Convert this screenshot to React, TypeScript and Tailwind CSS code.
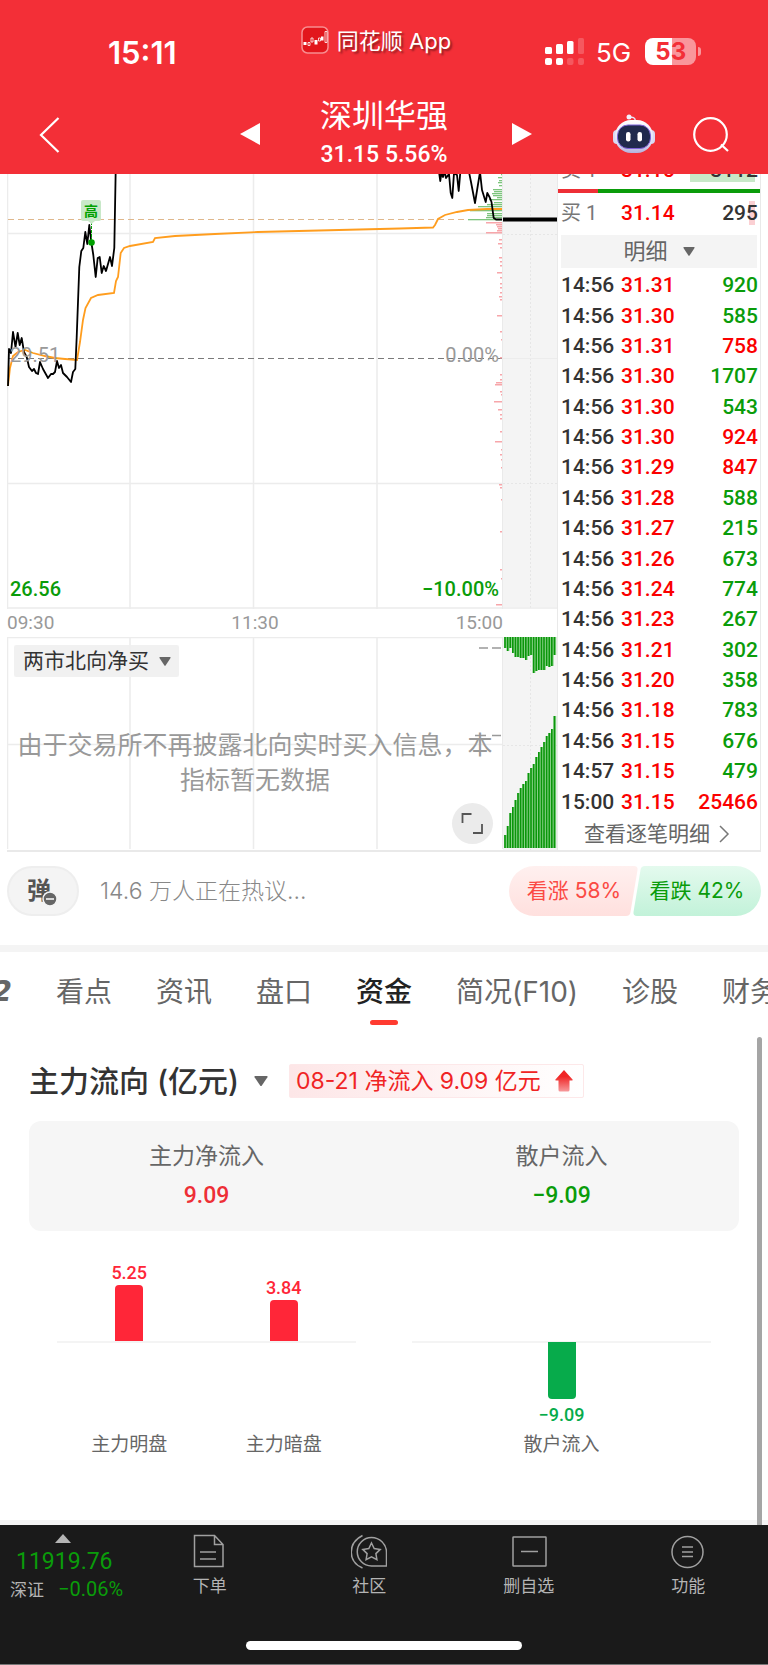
import type { ReactNode } from "react";
import clsx from "clsx";

type Tick = [time: string, price: string, volume: string, side: "up" | "down"];

const TICKS: Tick[] = [
  ["14:56", "31.31", "920", "down"],
  ["14:56", "31.30", "585", "down"],
  ["14:56", "31.31", "758", "up"],
  ["14:56", "31.30", "1707", "down"],
  ["14:56", "31.30", "543", "down"],
  ["14:56", "31.30", "924", "up"],
  ["14:56", "31.29", "847", "up"],
  ["14:56", "31.28", "588", "down"],
  ["14:56", "31.27", "215", "down"],
  ["14:56", "31.26", "673", "down"],
  ["14:56", "31.24", "774", "down"],
  ["14:56", "31.23", "267", "down"],
  ["14:56", "31.21", "302", "down"],
  ["14:56", "31.20", "358", "down"],
  ["14:56", "31.18", "783", "down"],
  ["14:56", "31.15", "676", "down"],
  ["14:57", "31.15", "479", "down"],
  ["15:00", "31.15", "25466", "up"],
];

const PRICE_OPEN =
  "8,386 9,349 11,353 13,332 15.5,347 17.7,333 19.7,345 21.7,338 24,352 26.7,357 29,367 32,371 34,369 36,373 38,374 40,362 43,369 48,378 51,374 53,374 55,372 57,361 59,368 61,365 63,373 67,377 71,382 73,372 75.3,369 76.7,337 79.3,267 81.3,251 83.3,248 85.3,232 87.3,244 89.3,225 91.3,242 93.3,255 95.7,277 97.7,258 99.7,257 101.7,273 103.7,266 106,271 110,257 112,266 114.3,248 115.7,170";
const PRICE_CLOSE =
  "439,172 440.3,181 441.5,172 443,177 444.5,171 446,178 449,174 450.7,193 452.3,198 454,173 457,175 458.7,191 460.5,170";
const PRICE_END =
  "469,172 471,182 475,203 480,172 482,190 485.7,202 487.3,193 489.5,197 491.5,202 493.7,218 496,219.5 502,219.5";
const AVERAGE =
  "8,386 10,368 13,356 18,352 25,350 33,353 45,356 55,358 65,359 77,360 80,342 83,320 85.5,308 91,298 98,295 114,293 116,281 118,277 120.7,253 124,248 130,246 153,242 155,238 175,236 215,234 258,232 400,228.5 433,227.5 435,225 438,219 445,215 457,212 468,210 487,209 502,209";

// [y, length] of the turnover ticks on the right edge of the price chart
const SELL_LEVELS = [
  [175, 1], [178, 4], [181, 3], [183, 4], [186, 3], [190, 9], [192, 8], [194, 10], [196, 9], [198, 5],
  [200, 13], [203, 8], [205, 15], [207, 24], [209, 10], [211, 32], [214, 15], [216, 15], [218, 16], [220, 34],
];
const BUY_LEVELS = [
  [223, 16], [225, 6], [227, 5], [229, 4], [231, 5], [233, 16], [240, 3], [244, 4], [248, 2], [258, 3], [262, 2],
  [266, 2], [273, 5], [278, 2], [284, 2], [288, 2], [293, 2], [297, 3], [300, 2], [316, 5], [332, 2], [340, 1],
  [358, 2], [375, 2], [380, 2], [383, 6], [385, 7], [392, 2], [395, 1], [402, 8], [410, 4], [415, 2], [419, 2],
  [432, 2], [442, 7], [450, 1], [455, 2], [460, 1], [468, 1], [485, 3], [488, 2], [500, 1], [532, 2], [570, 2],
  [579, 1], [605, 6],
];

const HANGING_BARS = [11, 14, 11, 16, 20, 20, 21, 21, 23, 19, 18, 36, 34, 33, 33, 33, 29, 30, 29, 18];
const RISING_BARS = [13, 22, 35, 41, 48, 55, 60, 64, 67, 75, 80, 84, 91, 96, 101, 106, 112, 115, 119, 132];

function Caret({ className }: { className?: string }) {
  return (
    <svg viewBox="0 0 12 9" className={className} fill="#666" aria-hidden>
      <path d="M1 0h10q1 0 .5 1L6.600 8.400q-.6.700-1.200 0L.5 1Q0 0 1 0z" />
    </svg>
  );
}

type DropdownProps = { label: string; value: string; className?: string; caret?: string };

function Dropdown({ label, value, className, caret }: DropdownProps) {
  return (
    <div className="relative inline-flex items-center">
      <select aria-label={label} className={clsx("cursor-pointer appearance-none bg-transparent outline-none", className)}>
        <option>{value}</option>
      </select>
      <Caret className={clsx("pointer-events-none absolute right-0", caret ?? "w-3")} />
    </div>
  );
}

function RobotIcon() {
  return (
    <svg viewBox="0 0 44 40" className="h-10 w-11" aria-hidden>
      <defs>
        <linearGradient id="shell" x1="0" y1="0" x2="0" y2="1">
          <stop offset="0" stopColor="#fff" />
          <stop offset=".7" stopColor="#dcdcf4" />
          <stop offset="1" stopColor="#b4b2dd" />
        </linearGradient>
      </defs>
      <path d="M17 3.500c4-1 6 0 6.500 3.500" fill="none" stroke="#e6e4f6" strokeWidth="1.500" />
      <circle cx="17" cy="3" r="2.500" fill="#f2f0fc" />
      <rect x="1" y="16" width="8" height="14" rx="4" fill="#d9d8f2" />
      <rect x="35" y="16" width="8" height="14" rx="4" fill="#d9d8f2" />
      <rect x="3" y="6" width="38" height="33" rx="16" fill="url(#shell)" />
      <rect x="5.500" y="11" width="33" height="23.500" rx="10.500" fill="#202a4d" stroke="#7d62d8" strokeWidth="1" />
      <rect x="14" y="18" width="4.500" height="9.500" rx="2.200" fill="#fff" />
      <rect x="25.500" y="18" width="4.500" height="9.500" rx="2.200" fill="#fff" />
    </svg>
  );
}

function StatusBar() {
  return (
    <div className="grid h-[88px] grid-cols-3">
      <div className="pt-[34px] pl-[108px] text-[31px] leading-[38px] font-semibold">15:11</div>
      <div className="flex items-start justify-center gap-2 pt-[26px] pr-4 text-[22px] leading-[30px] whitespace-nowrap">
        <svg viewBox="0 0 28 28" className="h-7 w-7 shrink-0" aria-hidden>
          <rect x="1" y="1" width="26" height="26" rx="5.500" fill="#e2161c" stroke="#f88d90" strokeWidth="1.500" />
          <path d="M2.500 16h3v3h-3zM13.500 14h3v4.500h-3zM20 10.500h2.500v4H20z" fill="#fff" />
          <path d="M7 16.500h2v3H7zM10 12h2v4h-2zM17.500 12h2v3h-2zM24 5.500h2v11h-2z" fill="none" stroke="#fff" strokeWidth=".8" />
        </svg>
        <span className="[text-shadow:2px_2px_2px_#00000066]">同花顺 App</span>
      </div>
      <div className="flex items-start pt-[38px] pl-8">
        <svg viewBox="0 0 40 28" className="h-7 w-10" fill="#fff" aria-hidden>
          <rect x="1" y="9" width="7" height="7" rx="1.500" />
          <rect x="12" y="6" width="7" height="10" rx="1.500" />
          <rect x="23" y="3" width="6.500" height="13" rx="1.500" />
          <rect x="34" y="0" width="6" height="16" rx="1.500" opacity=".2" />
          <rect x="1" y="20" width="7" height="7" rx="2" />
          <rect x="12" y="20" width="7" height="7" rx="2" />
          <rect x="23" y="20" width="6.500" height="7" rx="2" opacity=".2" />
          <rect x="34" y="20" width="6" height="7" rx="2" opacity=".2" />
        </svg>
        <span className="ml-3 text-[26px] leading-[30px]">5G</span>
        <div className="ml-3.5 flex items-center">
          <div className="flex h-[27px] w-[51px] items-center justify-center rounded-[8px] bg-linear-to-r from-white from-53% to-[#f9969b] to-53% text-[24px] leading-none font-bold text-[#f32f37]">
            53
          </div>
          <span className="ml-0.5 h-[9px] w-[3px] rounded-r-full bg-[#f9969b]" />
        </div>
      </div>
    </div>
  );
}

function Header() {
  return (
    <header className="bg-[#f32f37] text-white">
      <StatusBar />
      <div className="grid h-[86px] grid-cols-[1fr_auto_1fr]">
        <button aria-label="返回" className="mt-7 ml-[38px] h-[38px] w-6">
          <svg viewBox="0 0 24 38" fill="none" stroke="#fff" strokeWidth="2.200">
            <path d="M20.500 2 3 19l17.500 17" />
          </svg>
        </button>
        <div className="flex items-start gap-[60px] pl-1">
          <button aria-label="上一只" className="mt-[35px] w-5">
            <svg viewBox="0 0 20 22" fill="#fff">
              <path d="M20 0v22L0 11z" />
            </svg>
          </button>
          <div className="pr-1 text-center">
            <h1 className="pt-2 text-[32px] leading-10">深圳华强</h1>
            <p className="font-[Roboto] text-[23px] leading-[38px] font-medium">31.15 5.56%</p>
          </div>
          <button aria-label="下一只" className="mt-[35px] w-5">
            <svg viewBox="0 0 20 22" fill="#fff">
              <path d="M0 0v22l20-11z" />
            </svg>
          </button>
        </div>
        <div className="flex items-start justify-end gap-9 pt-[26px] pr-[38px]">
          <button aria-label="智能助手">
            <RobotIcon />
          </button>
          <button aria-label="搜索" className="mt-0.5 w-[38px]">
            <svg viewBox="0 0 38 38" fill="none" stroke="#fff" strokeWidth="2.200">
              <circle cx="18.500" cy="18.500" r="16.300" />
              <path d="m29 28.500 7 6.500" />
            </svg>
          </button>
        </div>
      </div>
    </header>
  );
}

function PriceChart() {
  return (
    <div className="relative h-[435px] overflow-hidden font-[Roboto] text-[20px] leading-6">
      <svg viewBox="7 174 496 435" preserveAspectRatio="none" className="h-full w-full" fill="none" aria-hidden>
        <path d="M7.500 174v435M130 174v435M253.500 174v435M377 174v435M7 233.500h496M7 483.500h496M7 608h496" stroke="#ececec" strokeWidth="1.500" />
        <path d="M502.500 174v435" stroke="#eaeaea" />
        <path d="M8 219.500h494" stroke="#dfb78c" strokeDasharray="6 4" />
        <path d="M8 358.500h494" stroke="#7a7a7a" strokeDasharray="6 4" />
        {SELL_LEVELS.map(([y, len]) => (
          <rect key={y} x={502 - len} y={y - 1} width={len} height="1.300" fill="#7cc47c" />
        ))}
        {BUY_LEVELS.map(([y, len]) => (
          <rect key={y} x={502 - len} y={y - 1} width={len} height="1.500" fill="#f7a6aa" />
        ))}
        <polyline points={AVERAGE} stroke="#ff9d1e" strokeWidth="1.800" />
        <g stroke="#000" strokeWidth="1.800" strokeLinejoin="round">
          <polyline points={PRICE_OPEN} />
          <polyline points={PRICE_CLOSE} />
          <polyline points={PRICE_END} />
        </g>
        <path d="M91.500 222v18" stroke="#00a000" strokeDasharray="3 1" />
        <path d="M88 221h7l-3.500 3z" fill="#c8e8c8" />
        <circle cx="91.500" cy="242.500" r="3.300" fill="#00a000" />
      </svg>
      <span className="absolute top-[26px] left-[74px] rounded-xs bg-[#c8e8c8] px-[3px] text-[14px] leading-[21px] font-bold text-[#00a000] [font-family:'Noto_Sans_CJK_SC']">
        高
      </span>
      <span className="absolute top-[169px] left-[3px] text-[#999]">29.51</span>
      <span className="absolute top-[169px] right-1 text-[#999]">0.00%</span>
      <span className="absolute bottom-2 left-[3px] font-medium text-[#0a9c0a]">26.56</span>
      <span className="absolute right-1 bottom-2 font-medium text-[#0a9c0a]">−10.00%</span>
    </div>
  );
}

function NorthboundPanel() {
  return (
    <div className="relative h-[213px]">
      <svg viewBox="7 637 496 213" preserveAspectRatio="none" className="absolute inset-0 h-full w-full" fill="none" aria-hidden>
        <path d="M7.500 637v212M130 637v212M253.500 637v212M377 637v212M7 744.500h496M7 637.500h496" stroke="#ececec" strokeWidth="1.500" />
        <path d="M502.500 637v212" stroke="#eaeaea" />
        <path d="M479 648h9M492 648h9M475 735.500h11M492 735.500h9" stroke="#999" strokeWidth="1.500" />
      </svg>
      <div className="relative flex h-full flex-col items-start pt-2 pl-[7px]">
        <div className="rounded-xs bg-[#f0f0f0]/90 pr-2 pl-[9px]">
          <Dropdown label="指标" value="两市北向净买" className="h-8 pr-[22px] text-[21px] text-[#333]" />
        </div>
        <p className="mt-[51px] w-full pr-[7px] text-center text-[25px] leading-[35px] text-[#999]">
          由于交易所不再披露北向实时买入信息，本指标暂无数据
        </p>
      </div>
      <button aria-label="全屏" className="absolute right-[10px] bottom-[6px] h-[41px] w-[41px] rounded-full bg-[#ebebeb] p-[9px]">
        <svg viewBox="0 0 23 23" fill="none" stroke="#555" strokeWidth="1.800">
          <path d="M1.500 11V2h9M12 21h9v-9" />
        </svg>
      </button>
    </div>
  );
}

function AuctionColumn() {
  return (
    <div className="w-[54px] shrink-0">
      <svg viewBox="0 0 54 435" preserveAspectRatio="none" className="h-[435px] w-full bg-[#f4f4f4]" fill="none" aria-hidden>
        <path d="M27.500 0v435M0 60.500h54M0 309.500h54" stroke="#e6e6e6" strokeDasharray="2 2" />
        <path d="M0 184.500h54M0 434h54" stroke="#ececec" />
        <rect y="43.500" width="54" height="4" fill="#000" />
      </svg>
      <div className="h-7" />
      <svg viewBox="0 0 54 213" preserveAspectRatio="none" className="h-[213px] w-full bg-[#f4f4f4]" aria-hidden>
        <path d="M27.500 0v213M0 108.500h54" stroke="#e6e6e6" strokeDasharray="2 2" />
        {HANGING_BARS.map((h, i) => (
          <g key={i}>
            <rect x={1.2 + i * 2.6} width="2.600" height={h} fill="#84d084" />
            <rect x={1.2 + i * 2.6} width="1.600" height={h} fill="#0a960a" />
          </g>
        ))}
        {RISING_BARS.map((h, i) => (
          <g key={i}>
            <rect x={1.2 + i * 2.6} y={211 - h} width="2.600" height={h} fill="#84d084" />
            <rect x={1.2 + i * 2.6} y={211 - h} width="1.600" height={h} fill="#0a960a" />
          </g>
        ))}
      </svg>
    </div>
  );
}

function QuoteRow({ side, price, children }: { side: string; price: string; children: ReactNode }) {
  return (
    <div className="flex w-full shrink-0 items-center pr-0.5 pl-[3px] font-[Roboto] text-[21px] leading-6 font-medium">
      <span className="w-[60px] text-[20px] font-normal text-[#777] [font-family:Roboto,'Noto_Sans_CJK_SC']">{side}</span>
      <span className="text-[#fb0000]">{price}</span>
      {children}
    </div>
  );
}

function TradeList() {
  return (
    <div className="flex w-[204px] shrink-0 flex-col border-x border-[#e9e9e9] bg-white">
      <div className="flex h-[15px] items-end overflow-hidden pb-[7px]">
        <QuoteRow side="卖 1" price="31.15">
          <span className="ml-auto w-[68px] bg-[linear-gradient(to_left,transparent_3px,#c8e8c8_3px)] text-right text-[#333]">
            3112
          </span>
        </QuoteRow>
      </div>
      <div className="flex h-1">
        <span className="w-1/5 bg-[#ee2f36]" />
        <span className="flex-1 bg-[#0a9c0a]" />
      </div>
      <div className="flex h-10 items-center">
        <QuoteRow side="买 1" price="31.14">
          <span className="ml-auto bg-[linear-gradient(to_left,transparent_3px,#fbd0d3_3px,#fbd0d3_9px,transparent_9px)] text-[#333]">
            295
          </span>
        </QuoteRow>
      </div>
      <div className="mx-[3px] mt-0.5 flex h-[33px] items-center justify-center bg-[#f4f4f4]">
        <Dropdown label="成交" value="明细" className="pr-[26px] text-[22px] text-[#666]" />
      </div>
      <table className="mt-0.5 h-[547px] w-full font-[Roboto] text-[21px] leading-6 font-medium">
        <tbody>
          {TICKS.map(([time, price, volume, side], i) => (
            <tr key={i}>
              <td className="w-[63px] p-0 pl-[3px] text-[#333]">{time}</td>
              <td className="p-0 text-[#fb0000]">{price}</td>
              <td className={clsx("p-0 pr-0.5 text-right", side === "up" ? "text-[#fb0000]" : "text-[#0a9c0a]")}>
                {volume}
              </td>
            </tr>
          ))}
        </tbody>
      </table>
      <a href="#ticks" className="flex flex-1 items-center justify-center gap-2 pr-1 text-[21px] text-[#666]">
        查看逐笔明细
        <svg viewBox="0 0 12 18" className="w-3" fill="none" stroke="#777" strokeWidth="1.500" aria-hidden>
          <path d="m2 1 8 8-8 8" />
        </svg>
      </a>
    </div>
  );
}

function DiscussionBar() {
  return (
    <section className="flex h-[93px] items-start px-[7px] pt-3.5">
      <button aria-label="弹幕" className="relative h-[50px] w-[72px] rounded-full border-2 border-[#eee] bg-[#f4f4f4]">
        <span className="block pr-2 text-[24px] leading-[42px] font-bold text-[#555]">弹</span>
        <svg viewBox="0 0 16 16" className="absolute top-[23px] left-[33px] w-4" aria-hidden>
          <circle cx="8" cy="8" r="7" fill="#666" stroke="#f4f4f4" strokeWidth="1.500" />
          <path d="M4 8h8" stroke="#fff" strokeWidth="1.500" />
        </svg>
      </button>
      <p className="ml-[21px] text-[23px] leading-[50px] font-light text-[#888]">14.6 万人正在热议...</p>
      <div className="ml-auto flex">
        <button className="relative h-[50px] w-[130px] text-[21px] text-[#fb4a44]">
          <svg viewBox="0 0 130 50" className="absolute inset-0" aria-hidden>
            <defs>
              <linearGradient id="bull" x1="0" y1="0" x2="0" y2="1">
                <stop offset="0" stopColor="#fff0ef" />
                <stop offset="1" stopColor="#ffe0de" />
              </linearGradient>
            </defs>
            <path d="M25 0h100q4 0 3.500 4l-7 42q-.5 4-4.500 4H25a25 25 0 0 1 0-50z" fill="url(#bull)" />
          </svg>
          <span className="relative">看涨 58%</span>
        </button>
        <button className="relative -ml-1.5 h-[50px] w-[128px] text-[21px] text-[#0a9c0a]">
          <svg viewBox="0 0 128 50" className="absolute inset-0" aria-hidden>
            <defs>
              <linearGradient id="bear" x1="0" y1="0" x2="0" y2="1">
                <stop offset="0" stopColor="#e4faee" />
                <stop offset="1" stopColor="#c2f2d9" />
              </linearGradient>
            </defs>
            <path d="M103 0H12Q8 0 7.500 4l-7 42Q0 50 4 50h99a25 25 0 0 0 0-50z" fill="url(#bear)" />
          </svg>
          <span className="relative">看跌 42%</span>
        </button>
      </div>
    </section>
  );
}

const TABS = ["看点", "资讯", "盘口", "资金", "简况(F10)", "诊股", "财务"];

function Tabs() {
  return (
    <nav className="box-content flex h-[85px] gap-11 overflow-hidden border-t-[7px] border-[#f4f4f4] text-[28px] leading-[80px] whitespace-nowrap text-[#666]">
      <a href="#2" className="flex w-3 shrink-0 justify-end font-bold italic [font-family:'DejaVu_Sans']">
        2
      </a>
      {TABS.map((tab) => (
        <a
          key={tab}
          href={`#${tab}`}
          className={clsx("relative shrink-0", tab === "资金" && "font-medium text-[#222]")}
        >
          {tab}
          {tab === "资金" && (
            <span className="absolute top-[68px] left-1/2 h-[5px] w-7 -translate-x-1/2 rounded-full bg-[#ff3b30]" />
          )}
        </a>
      ))}
    </nav>
  );
}

function UpBar({ name, value, className }: { name: string; value: string; className: string }) {
  return (
    <div className="flex flex-1 flex-col items-center">
      <div className="flex h-[91px] flex-col items-center justify-end">
        <span className="font-[Roboto] text-[18px] leading-6 font-medium text-[#ff2638]">{value}</span>
        <div className={clsx("w-7 rounded-t-sm bg-[#ff2638]", className)} />
      </div>
      <span className="mt-[88px] text-[19px] leading-[30px] text-[#666]">{name}</span>
    </div>
  );
}

function FundFlow() {
  return (
    <section className="relative flex-1 px-[29px] pt-[27px]">
      <div className="flex h-[34px] items-center">
        <Dropdown
          label="资金流向"
          value="主力流向 (亿元)"
          className="pr-7 text-[30px] leading-[34px] font-medium text-[#333]"
          caret="w-3.5"
        />
        <div className="ml-[21px] flex h-[34px] items-center gap-3.5 rounded-xs border border-[#fde8e9] bg-linear-to-r from-[#fde6e7] to-white px-1.5 text-[23px] whitespace-nowrap text-[#f02424]">
          08-21 净流入 9.09 亿元
          <svg viewBox="0 0 18 22" className="mr-1 w-[18px]" aria-hidden>
            <defs>
              <linearGradient id="inflow" x1="0" y1="0" x2="0" y2="1">
                <stop offset=".3" stopColor="#f02424" />
                <stop offset="1" stopColor="#f79a9c" />
              </linearGradient>
            </defs>
            <path d="m9 0 8.500 9.500q.8 1-.5 1h-2.500V20q0 1.500-1.500 1.500H5Q3.500 21.500 3.500 20v-9.500H1q-1.300 0-.5-1z" fill="url(#inflow)" />
          </svg>
        </div>
      </div>

      <dl className="mt-[23px] grid h-[110px] grid-cols-2 rounded-xl bg-[#f6f6f6] pt-[18px] text-center">
        <div>
          <dt className="text-[23px] leading-[34px] text-[#666]">主力净流入</dt>
          <dd className="mt-1.5 font-[Roboto] text-[23px] leading-[34px] font-medium text-[#ee2f36]">9.09</dd>
        </div>
        <div>
          <dt className="text-[23px] leading-[34px] text-[#666]">散户流入</dt>
          <dd className="mt-1.5 font-[Roboto] text-[23px] leading-[34px] font-medium text-[#0a9c0a]">−9.09</dd>
        </div>
      </dl>

      <div className="mt-5 grid grid-cols-2">
        <div className="relative flex px-[23px]">
          <span className="absolute inset-x-7 top-[90px] h-0.5 bg-[#f4f4f4]" />
          <UpBar name="主力明盘" value="5.25" className="h-[57px]" />
          <UpBar name="主力暗盘" value="3.84" className="h-[42px]" />
        </div>
        <div className="relative flex flex-col items-center pt-[91px]">
          <span className="absolute inset-x-7 top-[90px] h-0.5 bg-[#f4f4f4]" />
          <div className="relative h-[57px] w-7 rounded-b-sm bg-[#07ab4b]" />
          <span className="mt-1 font-[Roboto] text-[18px] leading-6 font-medium text-[#07ab4b]">−9.09</span>
          <span className="mt-[3px] text-[19px] leading-[30px] text-[#666]">散户流入</span>
        </div>
      </div>

      <span className="absolute top-0 right-1.5 -bottom-[5px] w-[5px] rounded-t-full bg-[#a5a5a5]" />
    </section>
  );
}

function NavItem({ label, children }: { label: string; children: ReactNode }) {
  return (
    <a href={`#${label}`} className="flex flex-1 flex-col items-center pt-[9px] text-[17px] leading-6 text-[#b4b4b4]">
      <svg viewBox="0 0 36 36" className="h-9 w-9" fill="none" stroke="#a0a0a0" strokeWidth="1.500" aria-hidden>
        {children}
      </svg>
      <span className="mt-1">{label}</span>
    </a>
  );
}

function BottomNav() {
  return (
    <footer className="h-[140px] border-b border-[#777] bg-[#1a1a1a]">
      <nav className="flex h-[116px]">
        <a href="#index" className="flex w-[130px] shrink-0 flex-col pt-[9px] font-[Roboto] text-[#0a9c0a]">
          <svg viewBox="0 0 16 9" className="ml-[55px] w-4" fill="#b4b4b4" aria-hidden>
            <path d="m8 0 8 9H0z" />
          </svg>
          <span className="mt-1.5 pl-4 text-[23px] leading-[26px]">11919.76</span>
          <span className="mt-px flex items-center gap-3.5 pl-[10px] text-[20px] leading-[26px]">
            <span className="text-[17px] text-[#b4b4b4] [font-family:'Noto_Sans_CJK_SC']">深证</span>
            −0.06%
          </span>
        </a>
        <NavItem label="下单">
          <path d="M2.500 1.500h20l8.500 9v22H2.500zM22.500 1.500v9H31M8 18h16M8 25h16" />
        </NavItem>
        <NavItem label="社区">
          <path d="M11.500 1.500C-3.500 9-3.500 27.500 11.500 34" />
          <path d="M20.500 3.500c8 0 15 6.500 15 15v13.500h-15a14.200 14.200 0 0 1 0-28.500z" />
          <path d="m20.500 9 2.700 5.500 6 .9-4.300 4.200 1 6-5.400-2.800-5.400 2.800 1-6-4.300-4.200 6-.9z" />
        </NavItem>
        <NavItem label="删自选">
          <rect x="2" y="3" width="33" height="29" rx=".5" />
          <path d="M10 17.500h17" />
        </NavItem>
        <NavItem label="功能">
          <circle cx="17.500" cy="18" r="15.500" />
          <path d="M12 13h11M12 18h11M12 22.500h11" />
        </NavItem>
      </nav>
      <div className="mx-auto h-[9px] w-[276px] rounded-full bg-white" />
    </footer>
  );
}

export default function App() {
  return (
    <div className="flex min-h-screen flex-col bg-white [font-family:Inter,'Noto_Sans_CJK_SC',sans-serif]">
      <Header />
      <main className="flex flex-1 flex-col border-b-[5px] border-[#f4f4f4]">
        <section className="mx-[7px] flex border-b-2 border-[#e9e9e9]">
          <div className="min-w-0 flex-1">
            <PriceChart />
            <div className="flex h-7 items-center justify-between font-[Roboto] text-[19px] text-[#999]">
              <span>09:30</span>
              <span>11:30</span>
              <span>15:00</span>
            </div>
            <NorthboundPanel />
          </div>
          <AuctionColumn />
          <TradeList />
        </section>
        <DiscussionBar />
        <Tabs />
        <FundFlow />
      </main>
      <BottomNav />
    </div>
  );
}
